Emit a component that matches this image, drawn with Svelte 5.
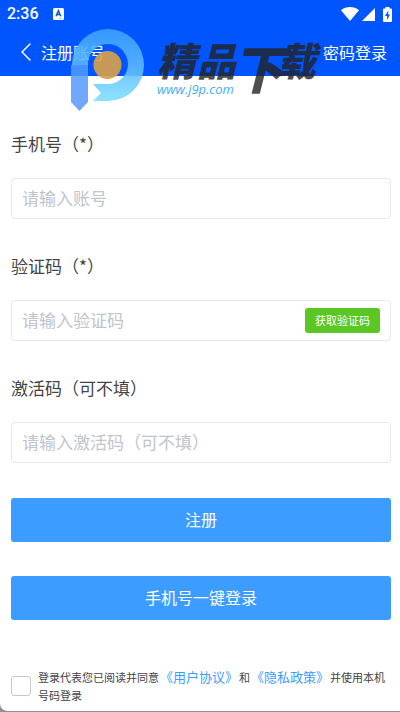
<script>
  let account = "";
  let code = "";
  let activation = "";
  let agreed = false;
</script>

<div class="screen">
  <header>
    <div class="status">
      <span class="time">2:36</span>
      <svg class="keyboard" width="11" height="12" viewBox="0 0 11 12">
        <rect width="11" height="12" rx="1.5" fill="#fff" />
        <path d="M3 8.2 5.4 2.6 7.8 8.2M3.8 6.5H7" fill="none" stroke="#0055ff" stroke-width="1.4" />
        <path d="M5.5 10.2H9" stroke="#8ab4ff" stroke-width="0.8" />
      </svg>
      <div class="signals">
        <svg width="18" height="14" viewBox="0 0 18 14">
          <path d="M0 3.2C5 -1 13 -1 18 3.2L9 14Z" fill="#fff" />
        </svg>
        <svg width="13" height="13" viewBox="0 0 13 13">
          <path d="M13 0V13H0Z" fill="#fff" />
        </svg>
        <svg class="battery" width="9" height="15" viewBox="0 0 9 15">
          <path d="M2.5 0H6.5V1.5H8Q9 1.5 9 2.5V14Q9 15 8 15H1Q0 15 0 14V2.5Q0 1.5 1 1.5H2.5Z" fill="#fff" />
          <path d="M5.3 3.5 2 9H4.1V13L7 7.5H5.1Z" fill="#0055ff" />
        </svg>
      </div>
    </div>
    <nav>
      <button class="back">
        <svg width="10" height="18" viewBox="0 0 10 18">
          <path d="M9 1 1 9 9 17" fill="none" stroke="#fff" stroke-width="1.5" stroke-linecap="round" />
        </svg>
        注册账号
      </button>
      <a class="switch" href="#login">密码登录</a>
    </nav>

    <svg class="watermark" width="252" height="84" viewBox="0 0 252 84">
      <defs>
        <linearGradient id="ring" x1="0" y1="0" x2="0" y2="1">
          <stop offset="0" stop-color="#3aa2ff" />
          <stop offset="0.5" stop-color="#5cb8ff" />
          <stop offset="1" stop-color="#7cdfff" />
        </linearGradient>
        <linearGradient id="stem" x1="0" y1="0" x2="0" y2="1">
          <stop offset="0" stop-color="#4f9dff" />
          <stop offset="1" stop-color="#5a96fa" />
        </linearGradient>
      </defs>
      <path
        d="M1 36A36 36 0 1 1 37 72H22L30 64 22 55H37A20 20 0 1 0 17 36Z"
        fill="url(#ring)"
        opacity="0.88"
      />
      <path d="M0 36H17V73L8.5 82 0 73Z" fill="url(#stem)" opacity="0.85" />
      <circle cx="36.5" cy="36" r="14" fill="#d69f4a" opacity="0.92" />
      <g class="brand">
        <text x="86" y="47" font-size="39">精</text>
        <text x="126" y="47" font-size="39">品</text>
        <text x="161" y="60" font-size="52">下</text>
        <text x="206" y="47" font-size="39">载</text>
      </g>
      <text class="site" x="86" y="65">www.j9p.com</text>
    </svg>
  </header>

  <main>
    <div class="field">
      <label for="account">手机号（*）</label>
      <div class="box">
        <input id="account" type="text" placeholder="请输入账号" bind:value={account} />
      </div>
    </div>
    <div class="field">
      <label for="code">验证码（*）</label>
      <div class="box">
        <input id="code" type="text" placeholder="请输入验证码" bind:value={code} />
        <button class="send">获取验证码</button>
      </div>
    </div>
    <div class="field">
      <label for="activation">激活码（可不填）</label>
      <div class="box">
        <input id="activation" type="text" placeholder="请输入激活码（可不填）" bind:value={activation} />
      </div>
    </div>

    <div class="actions">
      <button class="primary">注册</button>
      <button class="primary">手机号一键登录</button>
    </div>

    <div class="agreement">
      <input id="agree" type="checkbox" bind:checked={agreed} />
      <p>
        <label for="agree">登录代表您已阅读并同意</label><a href="#terms">《用户协议》</a><span>和</span><a href="#privacy">《隐私政策》</a><span>并使用本机号码登录</span>
      </p>
    </div>
  </main>
</div>

<style>
  :global(body) {
    margin: 0;
    background: #8f8f8f;
  }
  .screen {
    box-sizing: border-box;
    min-height: 100vh;
    border-bottom: 1px solid #8f8f8f;
    border-bottom-left-radius: 8px;
    background: #fff;
    color: #444;
    font-family: "Noto Sans CJK SC", sans-serif;
  }
  button,
  input {
    font-family: inherit;
  }
  button {
    border: none;
    padding: 0;
    color: #fff;
    cursor: pointer;
  }
  a {
    text-decoration: none;
  }
  header {
    position: relative;
    background: #0055ff;
    color: #fff;
  }
  .status {
    display: flex;
    align-items: center;
    height: 28px;
    padding: 0 8px 0 7px;
  }
  .time {
    font: 500 16px/28px Roboto, sans-serif;
  }
  .keyboard {
    margin-left: 14px;
  }
  .signals {
    display: flex;
    align-items: center;
    gap: 3px;
    margin-left: auto;
  }
  .battery {
    margin-left: 5px;
  }
  nav {
    display: flex;
    align-items: center;
    justify-content: space-between;
    height: 48px;
    padding: 0 13px 0 21px;
  }
  .back {
    display: flex;
    align-items: center;
    gap: 10px;
    background: none;
    font-size: 16px;
    line-height: 24px;
  }
  .switch {
    color: #fff;
    font-size: 16px;
    line-height: 24px;
  }
  .watermark {
    position: absolute;
    top: 29px;
    left: 71px;
    pointer-events: none;
  }
  .brand {
    fill: #222;
    opacity: 0.8;
    font-weight: 900;
    font-style: italic;
  }
  .site {
    fill: #42b1ee;
    font: italic 13px "Open Sans", sans-serif;
  }
  main {
    padding: 56px 9px 7px 11px;
  }
  .field {
    margin-bottom: 35px;
  }
  .field label {
    display: block;
    margin-bottom: 22px;
    font-size: 17px;
    line-height: 24px;
  }
  .box {
    display: flex;
    align-items: center;
    box-sizing: border-box;
    height: 41px;
    padding: 0 10px;
    border: 1px solid #e8e8ea;
    border-radius: 4px;
  }
  .box input {
    flex: 1;
    min-width: 0;
    padding: 0 0 2px;
    border: none;
    outline: none;
    background: none;
    color: #444;
    font-size: 17px;
    line-height: 24px;
  }
  .box input::placeholder {
    color: #c0c4cc;
    opacity: 1;
  }
  .send {
    height: 25px;
    padding: 0 10px 1px;
    border-radius: 3px;
    background: #5ac725;
    font-size: 11px;
  }
  .actions {
    display: flex;
    flex-direction: column;
    gap: 34px;
  }
  .primary {
    height: 44px;
    padding-bottom: 2px;
    border-radius: 3px;
    background: #3c9cff;
    font-size: 16px;
  }
  .agreement {
    display: flex;
    align-items: center;
    gap: 7px;
    margin-top: 48px;
  }
  .agreement input {
    flex: none;
    appearance: none;
    width: 20px;
    height: 20px;
    margin: 0;
    border: 1px solid #c8c9cc;
    border-radius: 3px;
  }
  .agreement input:checked {
    background: #3c9cff;
  }
  .agreement p {
    margin: 0;
    font-size: 11px;
    line-height: 18px;
  }
  .agreement a {
    margin: 0 1px;
    color: #3c9cff;
    font-size: 13px;
  }
</style>
